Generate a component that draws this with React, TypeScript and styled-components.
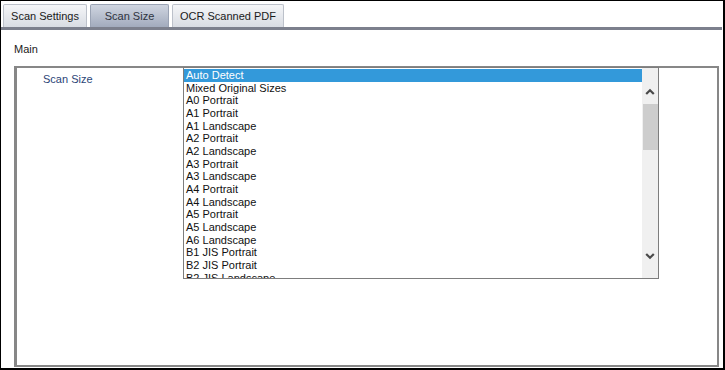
import React from 'react'
import styled, { createGlobalStyle } from 'styled-components'

const GlobalStyle = createGlobalStyle`
  html, body {
    margin: 0;
    padding: 0;
    background: #ffffff;
    font-family: "Liberation Sans", Arial, sans-serif;
  }
`

interface tabInterface {
  name: string,
  width: number,
}

const tabs: Array<tabInterface> = [
  {name: 'Scan Settings', width: 84},
  {name: 'Scan Size', width: 79},
  {name: 'OCR Scanned PDF', width: 112},
]

const sizes: Array<string> = [
  'Auto Detect',
  'Mixed Original Sizes',
  'A0 Portrait',
  'A1 Portrait',
  'A1 Landscape',
  'A2 Portrait',
  'A2 Landscape',
  'A3 Portrait',
  'A3 Landscape',
  'A4 Portrait',
  'A4 Landscape',
  'A5 Portrait',
  'A5 Landscape',
  'A6 Landscape',
  'B1 JIS Portrait',
  'B2 JIS Portrait',
  'B2 JIS Landscape',
]

const Chevron: React.FC<{ down?: boolean }> = ({ down }) => (
  <svg width="10" height="10" viewBox="0 0 10 10">
    <path
      d={down ? 'M1.2 3 L5 6.8 L8.8 3' : 'M1.2 7 L5 3.2 L8.8 7'}
      fill="none"
      stroke="#4a4a4a"
      strokeWidth="2.2"
    />
  </svg>
)

const App: React.FC = () => {
  const active = 'Scan Size'
  const selected = 'Auto Detect'

  return <>
    <GlobalStyle />
    <Frame>
      <TabBar>
        {tabs.map(t => (
          <Tab key={t.name} $active={t.name === active} $width={t.width}>
            {t.name}
          </Tab>
        ))}
      </TabBar>
      <Content>
        <SectionTitle>Main</SectionTitle>
        <Group>
          <FieldLabel>Scan Size</FieldLabel>
          <ListBox>
            <Options>
              {sizes.map(s => (
                <Option key={s} $selected={s === selected}>{s}</Option>
              ))}
            </Options>
            <ScrollBar>
              <Arrow $top={19}><Chevron /></Arrow>
              <Thumb />
              <Track />
              <Arrow $top={0}><Chevron down /></Arrow>
            </ScrollBar>
          </ListBox>
        </Group>
      </Content>
    </Frame>
  </>
}

const Frame = styled.div`
  width: 725px;
  height: 370px;
  box-sizing: border-box;
  border: 1px solid #000000;
  border-right-width: 2px;
  border-bottom-width: 2px;
  display: flex;
  flex-direction: column;
  background: #ffffff;
`

const TabBar = styled.div`
  display: flex;
  align-items: flex-end;
  gap: 3px;
  padding: 3px 0 0 2px;
  margin-right: 1px;
  box-sizing: border-box;
  border-bottom: 3px solid #7c808d;
  height: 29px;
`

const Tab = styled.div<{ $active: boolean, $width: number }>`
  width: ${p => p.$width}px;
  height: 23px;
  box-sizing: border-box;
  display: flex;
  align-items: center;
  justify-content: center;
  font-size: 11px;
  color: ${p => p.$active ? '#2e3440' : '#1a1a1a'};
  border: 1px solid ${p => p.$active ? '#9aa3b4' : '#bcc1ca'};
  border-bottom: none;
  border-radius: 2px 2px 0 0;
  background: ${p => p.$active
    ? 'linear-gradient(#cfd5e0, #a2abbd)'
    : 'linear-gradient(#f5f6f8, #d8dce3)'};
`

const Content = styled.div`
  flex: 1;
  display: flex;
  flex-direction: column;
  padding: 13px 4px 1px 13px;
`

const SectionTitle = styled.div`
  font-size: 11px;
  color: #1a1a1a;
  line-height: 13px;
  height: 23px;
`

const Group = styled.div`
  flex: 1;
  display: flex;
  align-items: flex-start;
  border: 2px solid #878787;
  border-left-width: 3px;
  border-right-width: 2px;
`

const FieldLabel = styled.div`
  width: 140px;
  padding: 5px 0 0 26px;
  font-size: 11px;
  color: #2b4577;
`

const ListBox = styled.div`
  display: flex;
  width: 476px;
  height: 212px;
  box-sizing: border-box;
  margin-top: -1px;
  border: 1px solid #7d7d7d;
  overflow: hidden;
`

const Options = styled.div`
  flex: 1;
  overflow: hidden;
  padding-top: 1px;
`

const Option = styled.div<{ $selected: boolean }>`
  font-size: 11px;
  line-height: 12.67px;
  height: 12.67px;
  padding-left: 2px;
  white-space: nowrap;
  color: ${p => p.$selected ? '#ffffff' : '#111111'};
  background: ${p => p.$selected ? '#3399da' : 'transparent'};
`

const ScrollBar = styled.div`
  width: 16px;
  display: flex;
  flex-direction: column;
  align-items: center;
  background: #f0f0f0;
  padding-bottom: 17px;
`

const Arrow = styled.div<{ $top: number }>`
  height: 10px;
  margin-top: ${p => p.$top}px;
  display: flex;
`

const Thumb = styled.div`
  width: 15px;
  height: 46px;
  margin-top: 7px;
  background: #cdcdcd;
`

const Track = styled.div`
  flex: 1;
`

export default App
